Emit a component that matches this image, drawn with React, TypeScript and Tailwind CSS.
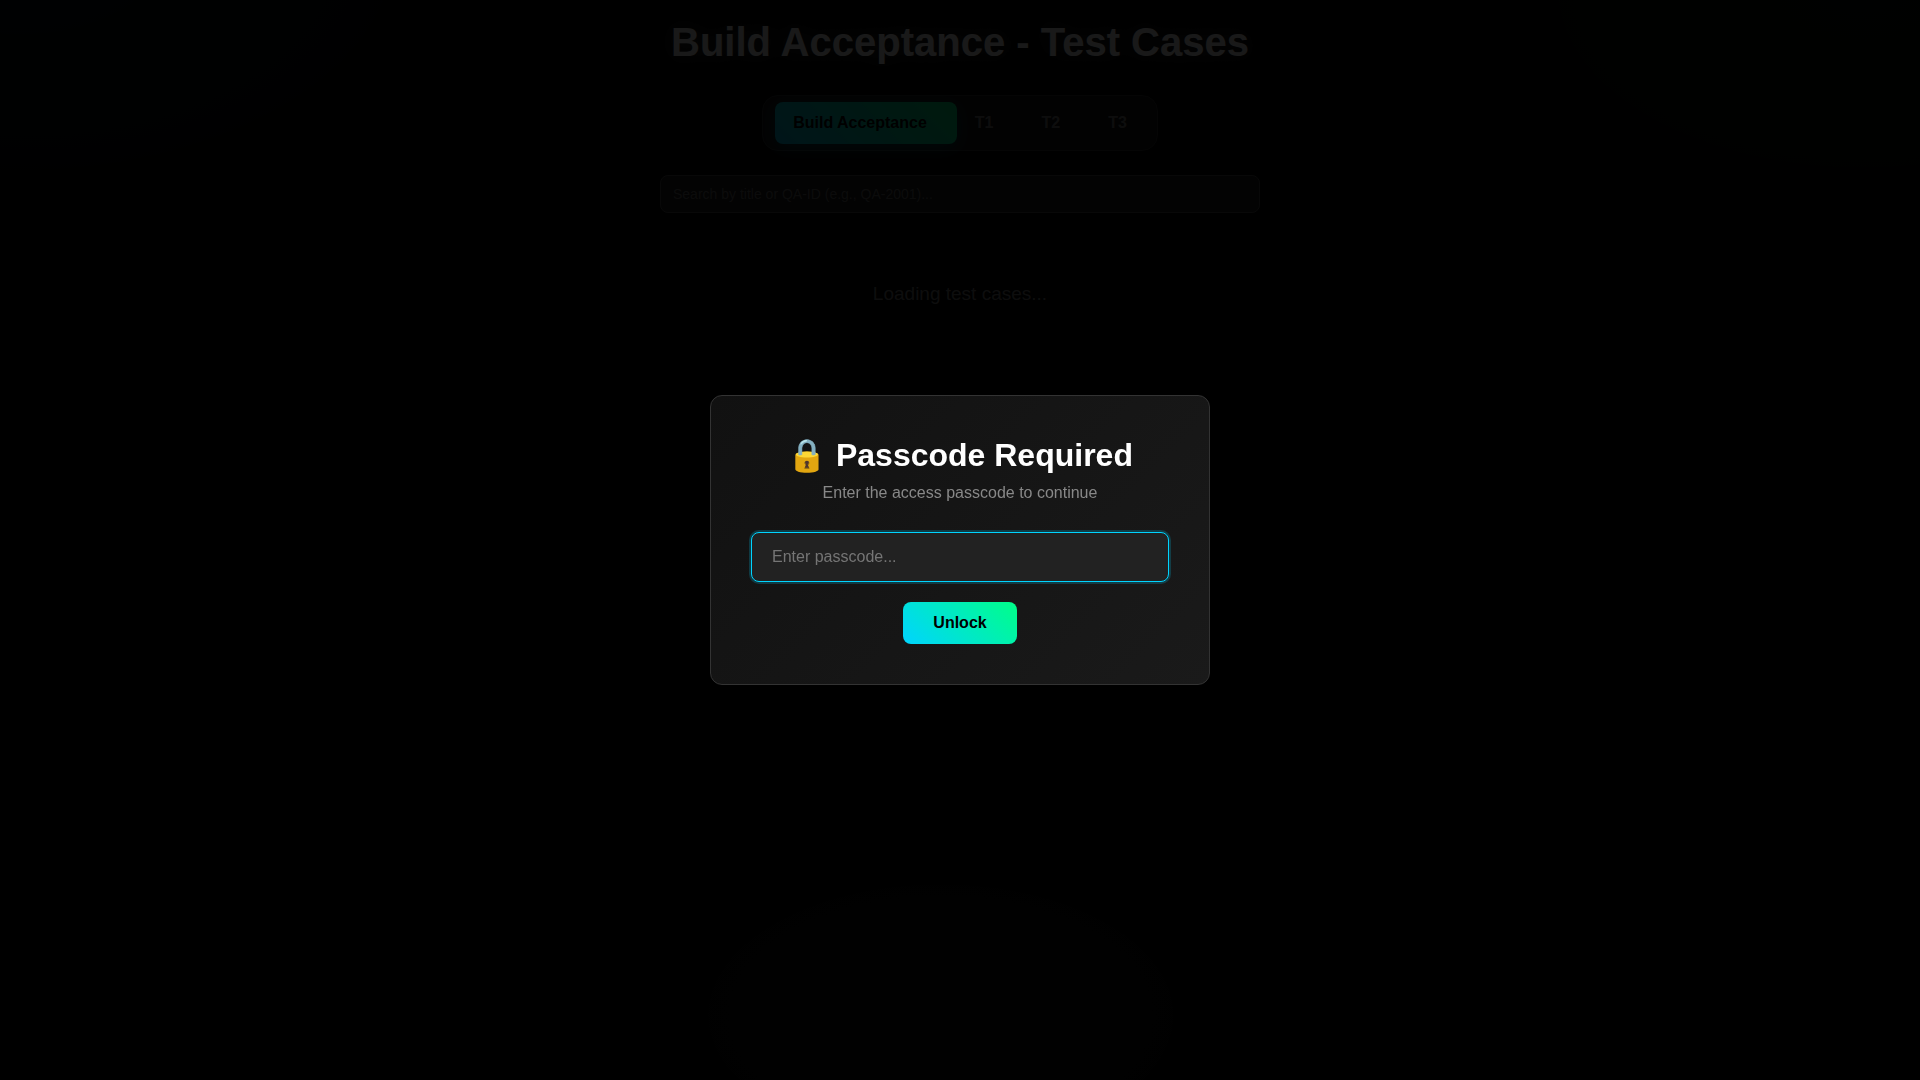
import { useState } from 'react';
import type { FormEvent } from 'react';

const tabs = ['Build Acceptance', 'T1', 'T2', 'T3'];

const PasscodeModal = () => {
  const [passcode, setPasscode] = useState('');

  const handleSubmit = (e: FormEvent) => {
    e.preventDefault();
  };

  return (
    <div className="fixed inset-0 z-50 flex items-center justify-center bg-black/90 p-4">
      <form
        onSubmit={handleSubmit}
        role="dialog"
        aria-labelledby="passcode-title"
        className="flex w-full max-w-[500px] flex-col items-center rounded-xl border border-[#333] bg-[linear-gradient(135deg,#111,#1a1a1a)] p-10 text-center"
      >
        <h2 id="passcode-title" className="mb-2.5 text-[32px] leading-[38px] font-bold text-white">
          🔒 Passcode Required
        </h2>
        <label htmlFor="passcode" className="mb-[30px] text-base leading-[18px] text-[#888]">
          Enter the access passcode to continue
        </label>
        <input
          id="passcode"
          type="password"
          value={passcode}
          onChange={(e) => setPasscode(e.target.value)}
          placeholder="Enter passcode..."
          className="mb-5 h-[50px] w-full rounded-lg border border-[#00d4ff] bg-[#222] px-5 text-base text-white ring-2 ring-[#00d4ff]/20 outline-none placeholder:text-[#757575]"
        />
        <button
          type="submit"
          className="h-[42px] rounded-lg bg-[linear-gradient(45deg,#00d4ff,#00ff88)] px-[30px] text-base font-bold text-black"
        >
          Unlock
        </button>
      </form>
    </div>
  );
};

export default function App() {
  const [activeTab, setActiveTab] = useState(tabs[0]);

  return (
    <div className="min-h-screen bg-black bg-[radial-gradient(ellipse_at_1%_-5%,rgba(0,212,255,0.1),transparent_22%),radial-gradient(ellipse_at_97%_-1%,rgba(0,255,136,0.08),transparent_22%),radial-gradient(33%_33%_at_49%_94%,rgba(255,255,255,0.06),transparent)] font-['Liberation_Sans',Arial,sans-serif] text-white">
      <div className="flex flex-col items-center px-4 pt-5">
        <h1 className="mb-[30px] text-[40px] leading-[45px] font-bold [text-shadow:0_0_20px_rgba(255,255,255,0.3)]">
          {activeTab} - Test Cases
        </h1>

        <nav className="mb-6 flex rounded-2xl border border-[#333] bg-[#161616] px-3 py-1.5">
          {tabs.map((tab) => (
            <button
              key={tab}
              onClick={() => setActiveTab(tab)}
              className={`h-[42px] rounded-lg pr-[30px] pl-[18px] text-base font-bold last:pr-[18px] ${
                tab === activeTab
                  ? 'bg-[linear-gradient(45deg,#00d4ff,#00ff88)] text-black shadow-[0_4px_20px_rgba(0,212,255,0.3)]'
                  : 'text-[#888]'
              }`}
            >
              {tab}
            </button>
          ))}
        </nav>

        <input
          type="text"
          aria-label="Search test cases"
          placeholder="Search by title or QA-ID (e.g., QA-2001)..."
          className="h-[38px] w-full max-w-[600px] rounded-lg border border-[#555] bg-[#1e1e1e] px-3 text-sm outline-none placeholder:text-[#757575]"
        />

        <p className="mt-[70px] text-[19px] leading-[22px] text-[#888]">Loading test cases...</p>
      </div>

      <PasscodeModal />
    </div>
  );
}
